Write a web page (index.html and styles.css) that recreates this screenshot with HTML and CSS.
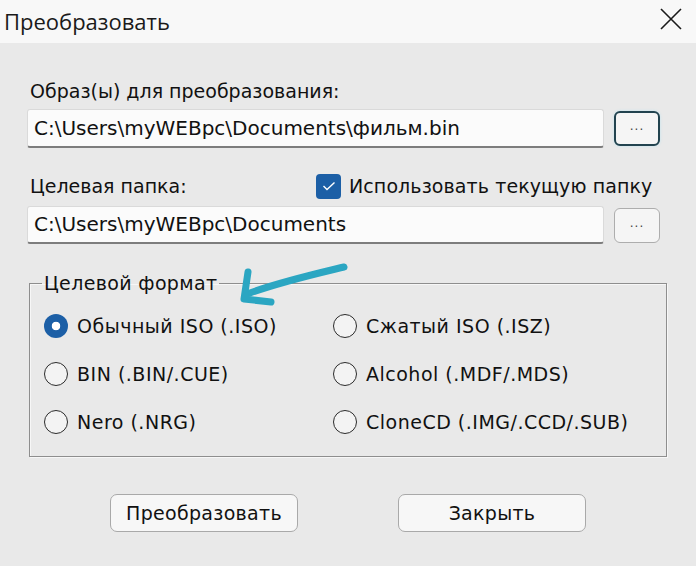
FILE: index.html
```html
<!DOCTYPE html>
<html lang="ru">
<head>
<meta charset="utf-8">
<title>Преобразовать</title>
<link rel="stylesheet" href="styles.css">
</head>
<body>
<div class="window">
  <div class="titlebar">
    <span class="title">Преобразовать</span>
    <svg class="close" width="22" height="22" viewBox="0 0 22 22"><path d="M1 1 L21 21 M21 1 L1 21" stroke="#1a1a1a" stroke-width="1.6" fill="none"/></svg>
  </div>
  <div class="content">
    <div class="label first">Образ(ы) для преобразования:</div>
    <div class="field-row">
      <div class="input">C:\Users\myWEBpc\Documents\фильм.bin</div>
      <div class="browse default">...</div>
    </div>
    <div class="label-row">
      <span class="label">Целевая папка:</span>
      <span class="check">
        <span class="checkbox"><svg width="14" height="10" viewBox="0 0 14 10"><path d="M1.5 5 L5 8.5 L12.5 1.5" stroke="#fff" stroke-width="1.4" fill="none"/></svg></span>
        <span class="check-label">Использовать текущую папку</span>
      </span>
    </div>
    <div class="field-row second">
      <div class="input">C:\Users\myWEBpc\Documents</div>
      <div class="browse">...</div>
    </div>
    <fieldset class="group">
      <legend>Целевой формат</legend>
      <div class="radios">
        <div class="radio-item"><span class="radio on"></span><span>Обычный ISO (.ISO)</span></div>
        <div class="radio-item"><span class="radio"></span><span>Сжатый ISO (.ISZ)</span></div>
        <div class="radio-item"><span class="radio"></span><span>BIN (.BIN/.CUE)</span></div>
        <div class="radio-item"><span class="radio"></span><span>Alcohol (.MDF/.MDS)</span></div>
        <div class="radio-item"><span class="radio"></span><span>Nero (.NRG)</span></div>
        <div class="radio-item"><span class="radio"></span><span>CloneCD (.IMG/.CCD/.SUB)</span></div>
      </div>
    </fieldset>
    <div class="buttons">
      <div class="btn">Преобразовать</div>
      <div class="btn">Закрыть</div>
    </div>
  </div>
  <svg class="arrow" width="696" height="566" viewBox="0 0 696 566">
    <path d="M344 267 C 315 274, 280 282, 250 293" stroke="#2ba6c2" stroke-width="7" stroke-linecap="round" fill="none"/>
    <path d="M248 272 L244 299 L271 302" stroke="#2ba6c2" stroke-width="7" stroke-linecap="round" stroke-linejoin="round" fill="none"/>
  </svg>
</div>
</body>
</html>
```
FILE: styles.css
```css
* { box-sizing: border-box; }
html, body { margin: 0; padding: 0; }
body {
  width: 696px;
  height: 566px;
  overflow: hidden;
  background: #f4f4f4;
}
.window {
  position: relative;
  width: 696px;
  height: 566px;
  background: #e9e9e9;
  font-family: "DejaVu Sans", "Liberation Sans", sans-serif;
  font-size: 19px;
  color: #111;
  display: flex;
  flex-direction: column;
}
.titlebar {
  height: 43px;
  background: #f8f8f8;
  display: flex;
  align-items: center;
  justify-content: space-between;
  padding: 0 14px 2px 4px;
}
.title {
  font-family: "Open Sans", "Noto Sans", sans-serif;
  font-size: 22px;
  color: #1a1a1a;
}
.close { display: block; margin-top: -4px; }
.content {
  flex: 1;
  padding: 36px 0 0 27px;
  display: flex;
  flex-direction: column;
  align-items: flex-start;
}
.label {
  line-height: 24px;
  padding-left: 3px;
}
.field-row {
  margin-top: 6px;
  display: flex;
  align-items: center;
  gap: 10px;
}
.field-row.second { margin-top: 7px; }
.input {
  width: 577px;
  height: 39px;
  background: #fbfbfb;
  border: 1px solid #dadada;
  border-bottom: 2px solid #7d7d7d;
  border-radius: 3px;
  padding: 0 0 0 6px;
  line-height: 36px;
  font-size: 20px;
  white-space: nowrap;
}
.field-row.second .input { height: 38px; line-height: 35px; }
.browse {
  width: 46px;
  height: 35px;
  border: 1px solid #adadad;
  border-radius: 6px;
  background: #f5f5f5;
  font-size: 12px;
  line-height: 28px;
  text-align: center;
  letter-spacing: 1px;
  color: #444;
}
.browse.default {
  border: 2px solid #22434f;
  box-shadow: 0 0 3px #bfe3ef;
  line-height: 26px;
}
.label-row {
  margin-top: 25px;
  width: 640px;
  height: 26px;
  display: flex;
  align-items: center;
}
.label-row .label { width: 289px; }
.check {
  display: flex;
  align-items: center;
  gap: 8px;
}
.check-label { letter-spacing: 0.1px; }
.checkbox {
  width: 25px;
  height: 25px;
  border-radius: 4px;
  background: #1c5fa6;
  display: flex;
  align-items: center;
  justify-content: center;
}
.group {
  margin: 27px 0 0 2px;
  width: 638px;
  padding: 0 0 10px 14px;
  border: 1px solid #8e8e8e;
  box-shadow: inset 1px 1px 0 #f7f7f7, 1px 1px 0 #f7f7f7;
  min-width: 0;
}
.group legend {
  margin-left: -2px;
  padding: 0 2px;
  line-height: 24px;
  font-size: 19px;
  letter-spacing: 0.35px;
}
.radios {
  margin-top: 7px;
  display: grid;
  grid-template-columns: 289px 1fr;
  grid-auto-rows: 48px;
  letter-spacing: 0.5px;
}
.radio-item {
  display: flex;
  align-items: center;
  gap: 9px;
  white-space: nowrap;
}
.radio {
  width: 24px;
  height: 24px;
  border-radius: 50%;
  border: 1.5px solid #2b2b2b;
  background: #f3f3f3;
  flex: none;
}
.radio.on {
  border: none;
  background: radial-gradient(circle, #ffffff 0 4px, #1c5fa6 4.6px);
}
.buttons {
  margin-top: 37px;
  align-self: stretch;
  margin-left: -27px;
  display: flex;
  justify-content: center;
  gap: 100px;
}
.btn {
  width: 188px;
  height: 38px;
  border: 1px solid #a9a9a9;
  border-radius: 7px;
  background: #f7f7f7;
  text-align: center;
  line-height: 36px;
  font-size: 19px;
  letter-spacing: 0.3px;
}
.arrow {
  position: absolute;
  left: 0;
  top: 0;
  pointer-events: none;
}
```
